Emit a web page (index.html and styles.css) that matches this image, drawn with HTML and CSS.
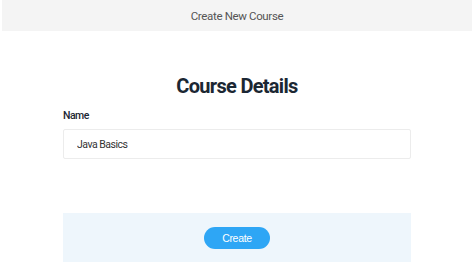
FILE: index.html
```html
<!DOCTYPE html>
<html lang="en">

<head>
  <meta charset="UTF-8">
  <meta name="viewport" content="width=device-width, initial-scale=1.0">
  <title>Create New Course</title>
  <link rel="stylesheet" href="styles.css">
</head>

<body>
  <div class="topbar">Create New Course</div>

  <div class="page">
    <h1 class="title">Course Details</h1>

    <div class="field">
      <label class="label" for="name">Name</label>
      <input class="input" id="name" type="text" value="Java Basics">
    </div>

    <div class="actions">
      <button class="btn" type="button">Create</button>
    </div>
  </div>
</body>

</html>
```

FILE: styles.css
```css
* {
  margin: 0;
  padding: 0;
  box-sizing: border-box;
}

body {
  background: #fff;
  font-family: Roboto, "Liberation Sans", sans-serif;
  color: #1b2733;
}

.topbar {
  margin: 0 2px;
  height: 31px;
  background: #f4f4f4;
  color: #555;
  font-size: 11.5px;
  letter-spacing: -0.35px;
  display: flex;
  justify-content: center;
  align-items: center;
}

.page {
  width: 348px;
  margin: 0 auto;
  display: flex;
  flex-direction: column;
}

.title {
  margin-top: 42px;
  text-align: center;
  font-size: 20px;
  font-weight: 700;
  letter-spacing: -0.7px;
  line-height: 26px;
}

.field {
  margin-top: 10px;
  display: flex;
  flex-direction: column;
}

.label {
  font-size: 10.5px;
  font-weight: 500;
  letter-spacing: -0.5px;
  line-height: 14px;
  color: #1b2733;
}

.input {
  margin-top: 6px;
  height: 30px;
  border: 1px solid #ececec;
  border-radius: 2px;
  padding: 0 13px;
  font-family: Roboto, "Liberation Sans", sans-serif;
  font-size: 10.5px;
  letter-spacing: -0.5px;
  color: #333;
  outline: none;
}

.actions {
  margin-top: 54px;
  height: 49px;
  background: #eef6fc;
  display: flex;
  justify-content: center;
  align-items: center;
}

.btn {
  width: 66px;
  height: 22px;
  border: none;
  border-radius: 11px;
  background: #2ea6f5;
  color: #fff;
  font-family: "Liberation Sans", Arial, sans-serif;
  font-size: 10.5px;
  letter-spacing: -0.3px;
}
```
